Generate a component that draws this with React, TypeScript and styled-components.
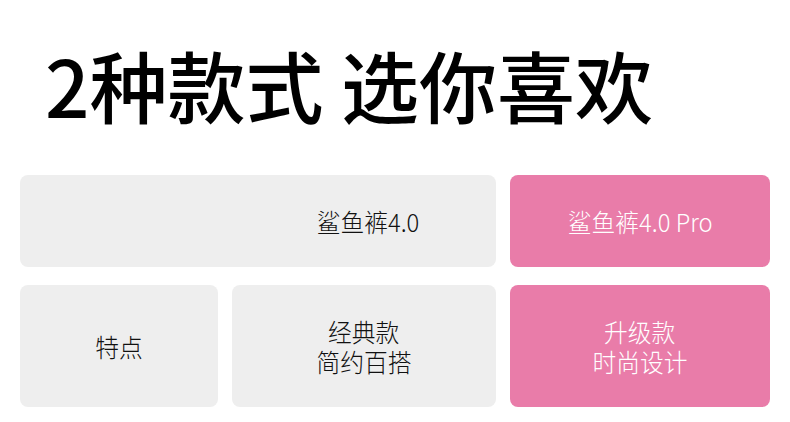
import styled, { createGlobalStyle } from "styled-components";

const GlobalStyle = createGlobalStyle`
  html, body {
    margin: 0;
    padding: 0;
    background: #ffffff;
  }
  body {
    font-family: "Noto Sans CJK SC", "Noto Sans", sans-serif;
  }
`;

const colors = {
  gray: "#eeeeee",
  pink: "#e97ca9",
  text: "#111111",
};

const Page = styled.div`
  width: 790px;
  height: 422px;
  box-sizing: border-box;
  padding: 0 20px;
  overflow: hidden;
`;

const Title = styled.h1`
  margin: 0;
  padding: 45px 0 0 25px;
  height: 175px;
  box-sizing: border-box;
  font-size: 78px;
  line-height: 78px;
  font-weight: 500;
  color: #000;
  white-space: pre;
`;

const Table = styled.div`
  display: grid;
  grid-template-columns: 198px 264px 260px;
  grid-template-rows: 92px 122px;
  column-gap: 14px;
  row-gap: 18px;
`;

const Cell = styled.div<{ $pink?: boolean; $span?: number }>`
  grid-column: span ${(p) => p.$span ?? 1};
  background: ${(p) => (p.$pink ? colors.pink : colors.gray)};
  color: ${(p) => (p.$pink ? "#ffffff" : colors.text)};
  border-radius: 8px;
  display: flex;
  flex-direction: column;
  align-items: center;
  justify-content: center;
  gap: 2px;
  font-size: 25px;
  line-height: 28px;
  font-weight: 300;
  text-align: center;
`;

// the merged header cell keeps the column grid so its label sits over column 2
const HeaderInner = styled.div`
  width: 100%;
  display: grid;
  grid-template-columns: 202px 264px;
  column-gap: 14px;
`;

const Label = styled.span`
  display: block;
  transform: scaleX(0.95);
`;

export default function App() {
  return (
    <Page>
      <GlobalStyle />
      <Title>{"2种款式 选你喜欢"}</Title>
      <Table>
        <Cell $span={2}>
          <HeaderInner>
            <span />
            <Label>鲨鱼裤4.0</Label>
          </HeaderInner>
        </Cell>
        <Cell $pink>
          <Label>鲨鱼裤4.0 Pro</Label>
        </Cell>
        <Cell>
          <Label>特点</Label>
        </Cell>
        <Cell>
          <Label>经典款</Label>
          <Label>简约百搭</Label>
        </Cell>
        <Cell $pink>
          <Label>升级款</Label>
          <Label>时尚设计</Label>
        </Cell>
      </Table>
    </Page>
  );
}
